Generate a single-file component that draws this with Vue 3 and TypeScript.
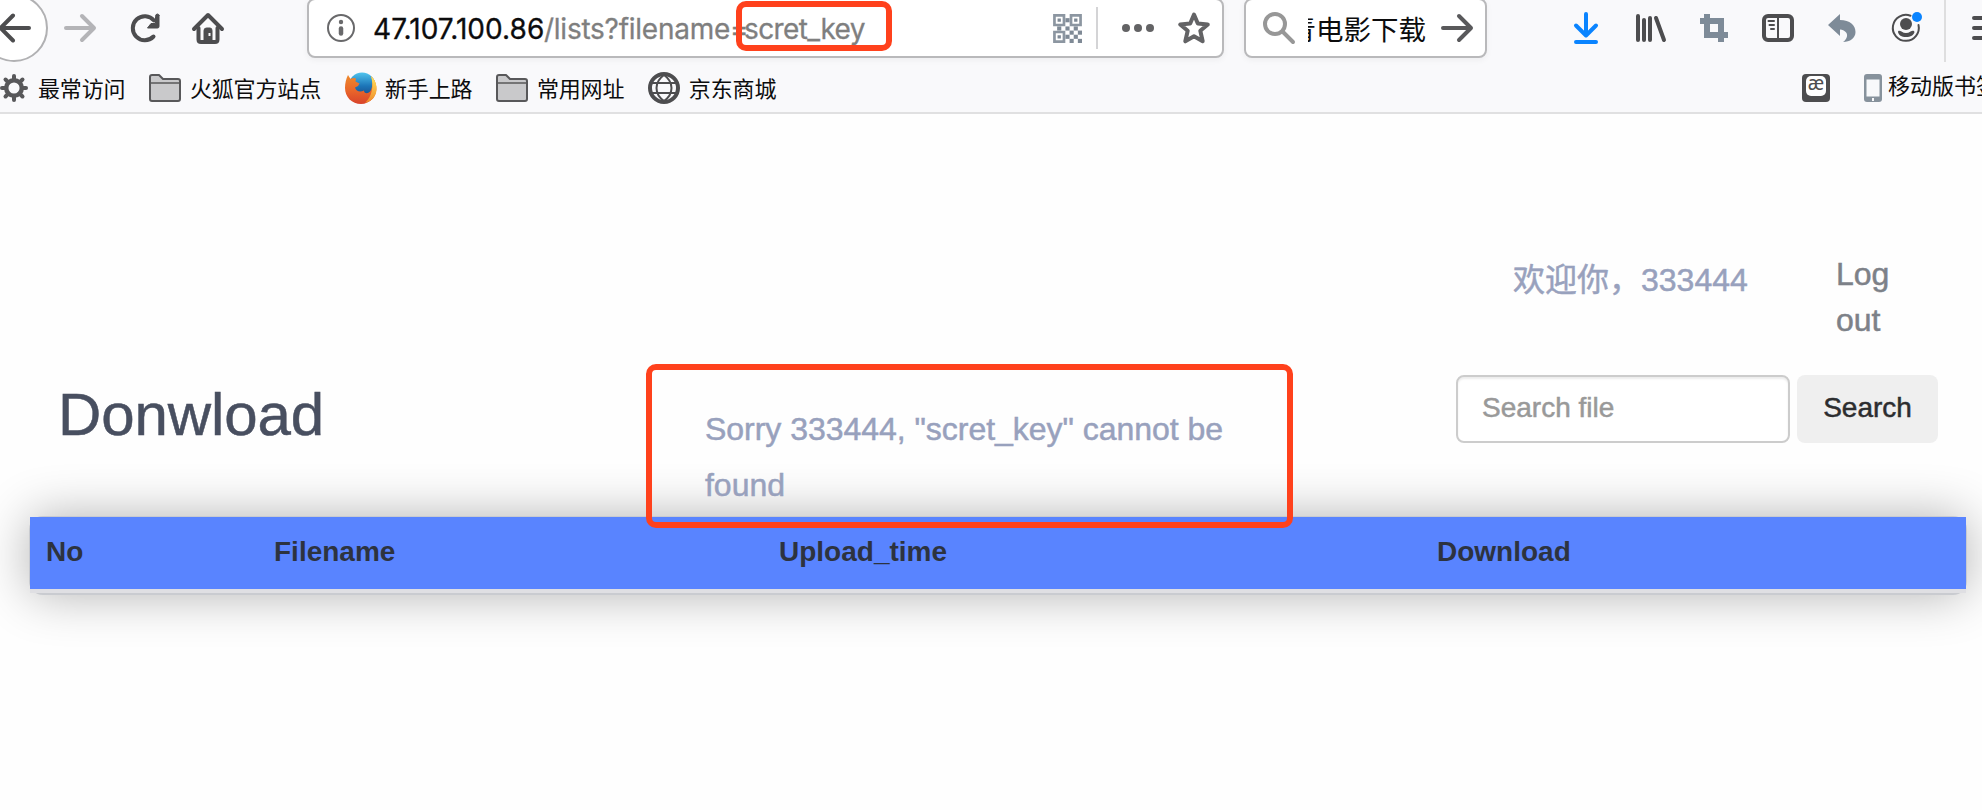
<script setup lang="ts">
interface Bookmark {
  label: string
  icon: 'gear' | 'folder' | 'fox' | 'globe'
}

const bookmarks: Bookmark[] = [
  { label: '最常访问', icon: 'gear' },
  { label: '火狐官方站点', icon: 'folder' },
  { label: '新手上路', icon: 'fox' },
  { label: '常用网址', icon: 'folder' },
  { label: '京东商城', icon: 'globe' },
]

const columns: string[] = ['No', 'Filename', 'Upload_time', 'Download']
const teeth: number[] = [0, 45, 90, 135, 180, 225, 270, 315]
const user = '333444'
const key = 'scret_key'

// Modules of the code icon on a 14-unit grid, each 2 units wide
const modules: [number, number][] = [
  [6, 2], [2, 6], [10, 6], [6, 6], [8, 8], [12, 8], [6, 10], [10, 10], [8, 12], [12, 12],
]
</script>

<template>
  <div class="window">
    <header class="chrome">
      <div class="nav">
        <div class="back">
          <svg width="30" height="32" viewBox="0 0 30 32"><path d="M28 16H1M12 3.500L-.5 16L12 28.500" /></svg>
        </div>
        <svg class="ic forward" width="32" height="32" viewBox="0 0 32 32"><path d="M2 16H29M18 4L30 16L18 28" /></svg>
        <svg class="ic reload" width="32" height="32" viewBox="0 0 32 32">
          <path d="M24.500 24.500A12 12 0 1 1 25 8.500" />
          <path class="solid" d="M30 3.500V14.500Q30 16 28.500 16H18.500L22 11.500H26.500V4.500Q26.500 2 28.500 2Q30 2 30 3.500Z" />
        </svg>
        <svg class="ic home" width="32" height="32" viewBox="0 0 32 32">
          <path d="M2 17L16 3L30 17" />
          <path d="M6.500 16V27.500Q6.500 30 9 30H23Q25.500 30 25.500 27.500V16" />
          <path class="solid" d="M12 30V18.500Q12 16 14.500 16H18Q20 16 20 18.500V30Z" />
          <rect class="knob" x="16.500" y="21" width="2" height="3" />
        </svg>

        <div class="urlbar">
          <svg class="info" width="28" height="28" viewBox="0 0 28 28">
            <circle cx="14" cy="14" r="13" /><path d="M14 14.500V19.500" /><circle class="dot" cx="14" cy="8" r="2.200" />
          </svg>
          <div class="url"><span class="host">47.107.100.86</span><span class="path">/lists?filename=</span><span class="query">{{ key }}</span></div>
          <svg class="qr" width="29" height="29" viewBox="0 0 14 14">
            <path class="ring" d="M.7 .7H5.300V5.300H.7ZM8.700 .7H13.300V5.300H8.700ZM.7 8.700H5.300V13.300H.7Z" />
            <path class="core" d="M2.200 2.200H3.800V3.800H2.200ZM10.200 2.200H11.800V3.800H10.200ZM2.200 10.200H3.800V11.800H2.200Z" />
            <rect v-for="(m, i) in modules" :key="i" class="core" :x="m[0]" :y="m[1]" width="2" height="2" />
          </svg>
          <span class="divider"></span>
          <svg class="dots" width="32" height="10" viewBox="0 0 32 10"><circle cx="4" cy="5" r="4" /><circle cx="16" cy="5" r="4" /><circle cx="28" cy="5" r="4" /></svg>
          <svg class="star" width="32" height="32" viewBox="0 0 32 32"><path d="M16 2.500L19.800 11.500L29.800 12.500L22.300 18.800L24.700 29.300L16 24.200L7.300 29.300L9.700 18.800L2.200 12.500L12.200 11.500Z" /></svg>
          <span class="mark mark-key"></span>
        </div>

        <div class="searchbar">
          <svg width="32" height="32" viewBox="0 0 32 32" class="lens"><circle cx="12" cy="12" r="10" /><path d="M19.500 19.500L30 30" /></svg>
          <div class="clip"><span>青电影下载</span></div>
          <svg width="32" height="32" viewBox="0 0 32 32" class="go"><path d="M2 16H29M18 4L30 16L18 28" /></svg>
        </div>

        <svg class="ic download" width="24" height="32" viewBox="0 0 24 32"><path d="M12 2V23M2 13.500L12 23.500L22 13.500M2 30H22" /></svg>
        <svg class="ic library" width="32" height="28" viewBox="0 0 32 28"><path d="M2 2V26M8 6V26M14 4V26M20 4L28 26" /></svg>
        <svg class="ic crop" width="28" height="28" viewBox="0 0 28 28"><path d="M7 0V21H28M0 7H21V28" /></svg>
        <svg class="ic sidebar" width="32" height="28" viewBox="0 0 32 28">
          <rect x="2" y="2" width="28" height="24" rx="4" /><path class="thin" d="M16 3V25M6.500 7H12M7.500 11H12M9 15H12" />
        </svg>
        <svg class="ic undo" width="28" height="28" viewBox="0 0 28 28"><path d="M12 0V6C22 6 27.500 11 27.500 18C27.500 24 22 28 15 28C20 25 22 17 12 15.500V22L0 11Z" /></svg>
        <svg class="ic account" width="30" height="32" viewBox="0 0 30 32">
          <path class="orbit" d="M18.500 3.700A13 13 0 1 0 26.500 13" />
          <circle cx="14" cy="12" r="6" /><path d="M6 20C6 18 8 18.500 9.500 19.500Q14 22.500 18.500 19.500C20 18.500 22 18 22.500 20C22 23 18.500 25 14 25S6.500 23 6 20Z" />
          <circle class="badge" cx="25" cy="5" r="5" />
        </svg>
        <span class="tall"></span>
        <svg class="ic menu" width="28" height="28" viewBox="0 0 28 28"><path d="M2 4H26M2 14H26M2 24H26" /></svg>
      </div>

      <div class="bookmarks">
        <div v-for="b in bookmarks" :key="b.label" class="bookmark" :class="b.icon">
          <svg v-if="b.icon === 'gear'" width="28" height="28" viewBox="0 0 28 28">
            <circle class="wheel" cx="14" cy="14" r="7.800" />
            <path v-for="a in teeth" :key="a" class="tooth" d="M14 6V2" :transform="`rotate(${a} 14 14)`" />
          </svg>
          <svg v-else-if="b.icon === 'folder'" width="32" height="28" viewBox="0 0 32 28">
            <path class="paper" d="M1 3Q1 1 3 1H10L14 5H29Q31 5 31 7V25Q31 27 29 27H3Q1 27 1 25Z" /><path class="fold" d="M1 9H31" />
          </svg>
          <svg v-else-if="b.icon === 'fox'" width="32" height="32" viewBox="0 0 32 32">
            <defs>
              <linearGradient id="sky" x1="0" y1="0" x2="0" y2="1"><stop offset="0" stop-color="#50c4ee" /><stop offset=".5" stop-color="#1c75b8" /><stop offset="1" stop-color="#183f7b" /></linearGradient>
              <linearGradient id="fur" x1="0" y1="0" x2="0" y2="1"><stop offset="0" stop-color="#ee8a2c" /><stop offset=".55" stop-color="#e9652a" /><stop offset="1" stop-color="#d8432b" /></linearGradient>
              <linearGradient id="tail" x1="0" y1="0" x2="0" y2="1"><stop offset="0" stop-color="#ffe45c" /><stop offset="1" stop-color="#f08a28" /></linearGradient>
            </defs>
            <circle cx="17" cy="14" r="13.500" fill="url(#sky)" />
            <path d="M26 4C32 9 33.500 20 28 26.500C25 30 20 32 16 32C7 32 0 25 0 16C0 11 1 7 3 3L5.500 7Q8 5.500 11 6.500L10.500 9.500L14.500 11.500L13 14L10 15.500C11 20 16 20 19 18.500C19 22.500 24 22 26 18C28 13 28 8 26 4Z" fill="url(#fur)" />
            <path d="M26 4C32 9 34 20 28 26.500Q25 30 20 31C27 24 29 15 26 4Z" fill="url(#tail)" />
          </svg>
          <svg v-else width="32" height="32" viewBox="0 0 32 32">
            <circle class="rim" cx="16" cy="16" r="14" /><path class="grid" d="M3 11H29M3 21H29M16 3C6 10 6 22 16 29C26 22 26 10 16 3" />
          </svg>
          <span>{{ b.label }}</span>
        </div>
        <div class="ae"><span>æ</span></div>
        <svg class="phone" width="18" height="28" viewBox="0 0 18 28"><rect width="18" height="28" rx="3" /><rect class="glass" x="2.500" y="5.500" width="13" height="17" /><rect class="glass" x="8" y="24" width="2" height="3" /></svg>
        <span class="mobile">移动版书签</span>
      </div>
    </header>

    <main>
      <div class="account-row">
        <p class="welcome">欢迎你，{{ user }}</p>
        <a class="logout">Log<br />out</a>
      </div>
      <div class="tools">
        <h1>Donwload</h1>
        <div class="message">
          <p>Sorry {{ user }}, "{{ key }}" cannot be found</p>
          <span class="mark mark-message"></span>
        </div>
        <form class="find" @submit.prevent>
          <input type="text" placeholder="Search file" />
          <button type="submit">Search</button>
        </form>
      </div>
      <div class="sheet">
        <div class="thead"><div v-for="c in columns" :key="c">{{ c }}</div></div>
      </div>
    </main>
  </div>
</template>

<style>
html, body { margin: 0; overflow: hidden; background: #fefefe; }
</style>

<style scoped>
* { box-sizing: border-box; }
.window { width: 1982px; height: 810px; overflow: hidden; background: #fefefe; font-family: "Liberation Sans", "Noto Sans CJK SC", sans-serif; }
svg { display: block; flex: none; overflow: visible; fill: none; stroke-linecap: round; stroke-linejoin: round; }
.chrome { height: 114px; background: #f9f9fb; border-bottom: 2px solid #e0e0e1; overflow: hidden; }
.nav { display: flex; align-items: center; height: 56px; width: 2010px; }
.back { flex: none; width: 68px; height: 68px; margin-left: -20px; border: 2px solid #b1b1b3; border-radius: 50%; background: #fff; display: flex; align-items: center; padding-left: 19px; }
.back svg, .reload, .home { stroke: #4d4d4f; stroke-width: 4; }
.ic { stroke-width: 4; }
.forward { stroke: #b4b4b7; margin-left: 16px; }
.reload { margin-left: 33px; }
.home { margin-left: 31px; }
.solid { fill: #4d4d4f; stroke-width: 1; }
.knob { fill: #f9f9fb; stroke: none; }
.urlbar, .searchbar { position: relative; flex: none; display: flex; align-items: center; height: 60px; border: 2px solid #b9b9bb; border-radius: 8px; background: #fff; box-shadow: 0 2px 6px rgba(0, 0, 0, .05); }
.urlbar { width: 917px; margin-left: 83px; padding-left: 18px; }
.info { stroke: #69696b; stroke-width: 2; }
.info path { stroke-width: 4.500; }
.info .dot { fill: #69696b; stroke: none; }
.url { width: 680px; margin: 2px 0 0 18px; display: flex; white-space: pre; font: 28px/40px Inter, sans-serif; color: #7f7f7f; -webkit-text-stroke: .3px currentColor; }
.url span { flex: none; }
.host { width: 171px; color: #0c0c0d; letter-spacing: .05px; }
.path { width: 200px; letter-spacing: -.25px; }
.query { letter-spacing: -.6px; }
.ring { stroke: #8c96a1; stroke-width: 1.300; stroke-linejoin: miter; }
.core { fill: #7f8a96; }
.divider { width: 2px; height: 42px; margin-left: 14px; background: #d4d4d6; }
.dots { margin-left: 24px; fill: #636365; }
.star { margin-left: 24px; stroke: #636365; stroke-width: 4; }
.searchbar { width: 243px; margin-left: 20px; padding-left: 17px; }
.lens { stroke: #979797; stroke-width: 4; }
.clip { display: flex; justify-content: flex-end; width: 118px; height: 44px; margin-left: 13px; overflow: hidden; font: 27.500px/44px "Noto Sans CJK SC", sans-serif; color: #0c0c0d; white-space: nowrap; }
.clip span { flex: none; }
.go { margin-left: 15px; stroke: #59595b; stroke-width: 4; }
.download { margin-left: 87px; stroke: #0a84ff; }
.library { margin-left: 38px; stroke: #4d4d4f; }
.crop { margin-left: 32px; stroke: #7e8b98; stroke-width: 6; stroke-linecap: butt; stroke-linejoin: miter; }
.sidebar { margin-left: 34px; stroke: #4d4d4f; }
.thin { stroke-width: 2; }
.undo { margin-left: 34px; fill: #7e8b98; }
.account { margin-left: 36px; fill: #4d4d4f; }
.orbit { fill: none; stroke: #4d4d4f; stroke-width: 2; }
.badge { fill: #0a84ff; }
.tall { flex: none; width: 2px; height: 68px; margin-left: 22px; background: #dededf; }
.menu { margin-left: 26px; stroke: #4d4d4f; }
.bookmarks { display: flex; align-items: center; height: 56px; width: 2010px; padding-top: 8px; font: 22px/32px "Noto Sans CJK SC", sans-serif; color: #0c0c0d; white-space: nowrap; }
.bookmark { display: flex; align-items: center; margin-right: 24px; }
.bookmark span { margin-left: 8.500px; padding-bottom: 2px; letter-spacing: -.15px; }
.gear span { margin-left: 10px; }
.fox span { margin-left: 8px; }
.wheel { stroke: #58585a; stroke-width: 4.500; }
.tooth { stroke: #58585a; stroke-width: 4; }
.paper { fill: #c9c9cb; stroke: #58585a; stroke-width: 2; }
.fold { stroke: #58585a; stroke-width: 1.500; }
.rim { stroke: #4d4d4f; stroke-width: 4; }
.grid { stroke: #4d4d4f; stroke-width: 2; }
.ae { width: 28px; height: 28px; margin-left: auto; padding: 2px 4px 6px; border-radius: 4px; background: #4d4d4f; }
.ae span { display: flex; justify-content: center; height: 20px; border-radius: 5px; background: #fff; color: #4d4d4f; font: 19px/14px "Noto Sans", sans-serif; }
.phone { margin-left: 34px; fill: #87929c; }
.glass { fill: #f8f9fb; }
.mobile { width: 122px; margin-left: 6px; padding-bottom: 8px; }
.mark { position: absolute; border: 6px solid #ff411c; border-radius: 10px; pointer-events: none; }
.mark-key { left: 427px; top: 1px; width: 156px; height: 50px; }
.mark-message { z-index: 2; left: -59px; top: -11px; width: 647px; height: 164px; }
p, h1 { margin: 0; font-weight: 400; }
p, h1, .logout, input, button { -webkit-text-stroke: .5px currentColor; }
.account-row { display: flex; justify-content: flex-end; height: 261px; padding: 137px 93px 0 0; font-size: 32px; }
.welcome { width: 323px; padding-top: 6px; line-height: 46px; color: #98a1bd; }
.logout { width: 53px; line-height: 46px; color: #7d8188; }
.tools { display: flex; align-items: flex-start; height: 142px; }
h1 { width: 705px; padding: 5px 0 0 58px; font-size: 60px; line-height: 70px; color: #484f60; letter-spacing: -.1px; }
.message { position: relative; width: 751px; height: 142px; padding-top: 26px; font-size: 32px; line-height: 56px; color: #98a1bd; }
.message p { position: relative; z-index: 1; width: 540px; letter-spacing: -.03px; }
.find { display: flex; gap: 7px; font-size: 28px; }
input, button { height: 68px; margin: 0; border-radius: 8px; font: 28px "Liberation Sans", sans-serif; }
input { width: 334px; padding: 0 24px 3px; border: 2px solid #ccc; background: #fff; box-shadow: inset 0 2px 2px rgba(0, 0, 0, .075); outline: none; }
input::placeholder { color: #999; opacity: 1; }
button { width: 141px; padding: 0 0 3px; border: 0; background: #efefef; color: #2c2d2f; }
.sheet { width: 1938px; height: 79px; margin: -1px 0 0 29px; padding: 1px 1px 0; border-radius: 14px; background: #c9cbd0; box-shadow: 0 0 50px rgba(0, 0, 0, .3); }
.thead { display: grid; grid-template-columns: 228px 505px 658px 1fr; height: 76px; padding-left: 16px; border-bottom: 4px solid #dfdfe3; background: #5984ff; color: #2d333f; font-size: 28px; font-weight: 700; line-height: 69px; }
</style>
